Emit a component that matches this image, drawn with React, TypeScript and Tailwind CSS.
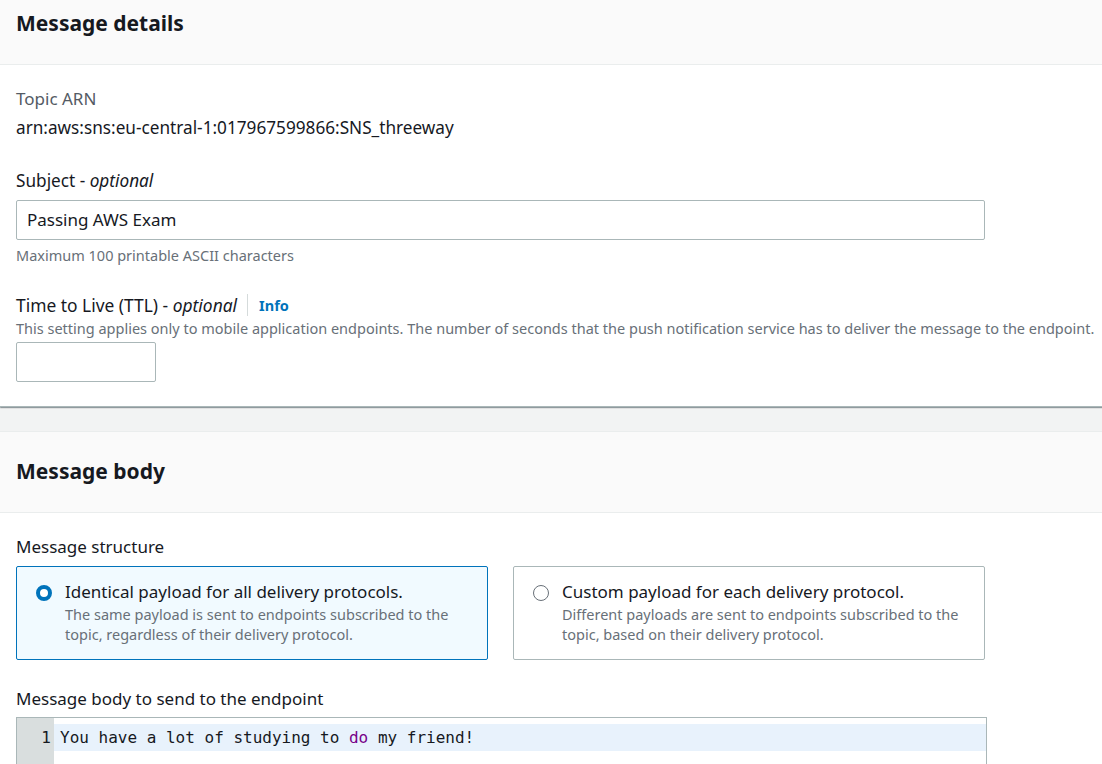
import React from 'react';

const font = { fontFamily: '"Noto Sans", "Open Sans", Arial, sans-serif' };
const mono = { fontFamily: '"DejaVu Sans Mono", monospace' };

function PanelHeader({ title, top }: { title: string; top: string }) {
  return (
    <div className={`bg-[#fafafa] border-b border-[#eaeded] px-4 ${top} pb-[28px]`}>
      <h2 className="text-[21px] leading-[26px] font-bold text-[#16191f]">{title}</h2>
    </div>
  );
}

function Radio({ checked }: { checked: boolean }) {
  return checked ? (
    <span className="w-4 h-4 rounded-full border-[4px] border-[#0073bb] bg-white shrink-0 mt-[4px]" />
  ) : (
    <span className="w-4 h-4 rounded-full border border-[#687078] bg-white shrink-0 mt-[4px]" />
  );
}

function Tile({ checked, title, desc }: { checked: boolean; title: string; desc: string }) {
  return (
    <div
      className={`flex gap-[13px] rounded-[2px] border px-[19px] pt-[14px] pb-[15px] h-[94px] ${
        checked ? 'bg-[#f1faff] border-[#0073bb]' : 'bg-white border-[#aab7b8]'
      }`}
    >
      <Radio checked={checked} />
      <div>
        <div className="text-[17px] leading-[22px] text-[#16191f]">{title}</div>
        <div className="text-[14.5px] leading-[20px] text-[#687078] mt-[1px]">{desc}</div>
      </div>
    </div>
  );
}

export default function App() {
  return (
    <div className="w-[1102px] h-[764px] overflow-hidden bg-[#f2f3f3]" style={font}>
      {/* Message details panel */}
      <section className="bg-white shadow-[0_1px_1px_0_rgba(0,28,36,0.3),1px_1px_1px_0_rgba(0,28,36,0.15)] border-b border-[#aab7b8]">
        <PanelHeader title="Message details" top="pt-[10px]" />
        <div className="px-4 pt-[23px] pb-[24px]">
          <div className="text-[17px] leading-[22px] text-[#545b64]">Topic ARN</div>
          <div className="text-[17.2px] leading-[22px] text-[#16191f] mt-[7px]">
            arn:aws:sns:eu-central-1:017967599866:SNS_threeway
          </div>

          <div className="mt-[31px] text-[17.2px] leading-[22px] text-[#16191f]">
            Subject - <i>optional</i>
          </div>
          <div className="mt-[8px] w-[969px] h-[40px] border border-[#aab7b8] rounded-[2px] flex items-center px-[10px] text-[17px] text-[#16191f]">
            Passing AWS Exam
          </div>
          <div className="mt-[4px] text-[14.5px] leading-[22px] text-[#687078]">Maximum 100 printable ASCII characters</div>

          <div className="mt-[28px] flex items-center text-[17.4px] leading-[22px] text-[#16191f]">
            <span>
              Time to Live (TTL) - <i>optional</i>
            </span>
            <span className="ml-[10px] h-[22px] border-l border-[#d5dbdb]" />
            <span className="ml-[11px] text-[14.5px] font-bold text-[#0073bb]">Info</span>
          </div>
          <div className="mt-[2px] text-[14.5px] leading-[20px] text-[#687078] whitespace-nowrap">
            This setting applies only to mobile application endpoints. The number of seconds that the push notification service has to deliver the message to the endpoint.
          </div>
          <div className="mt-[4px] w-[140px] h-[40px] border border-[#aab7b8] rounded-[2px]" />
        </div>
      </section>

      {/* Message body panel */}
      <section className="mt-[24px] bg-white border-t border-[#eaeded]">
        <PanelHeader title="Message body" top="pt-[26px]" />
        <div className="px-4 pt-[23px]">
          <div className="text-[17px] leading-[22px] text-[#16191f]">Message structure</div>
          <div className="mt-[8px] grid grid-cols-[472px_472px] gap-[25px]">
            <Tile
              checked
              title="Identical payload for all delivery protocols."
              desc="The same payload is sent to endpoints subscribed to the topic, regardless of their delivery protocol."
            />
            <Tile
              checked={false}
              title="Custom payload for each delivery protocol."
              desc="Different payloads are sent to endpoints subscribed to the topic, based on their delivery protocol."
            />
          </div>

          <div className="mt-[28px] text-[17px] leading-[22px] text-[#16191f]">Message body to send to the endpoint</div>
          <div className="mt-[7px] w-[971px] h-[80px] border border-[#aab7b8] flex">
            <div className="w-[37px] bg-[#d9dede] shrink-0 pt-[6px]">
              <div className="h-[27px] flex items-center justify-end pr-[3px] text-[16px] text-[#16191f]" style={mono}>
                1
              </div>
            </div>
            <div className="flex-1 pt-[6px]">
              <div
                className="h-[27px] bg-[#e8f2fc] flex items-center pl-[6px] text-[16px] text-[#16191f] whitespace-pre"
                style={mono}
              >
                You have a lot of studying to <span className="text-[#770088]">do</span> my friend!
              </div>
            </div>
          </div>
        </div>
      </section>
    </div>
  );
}
